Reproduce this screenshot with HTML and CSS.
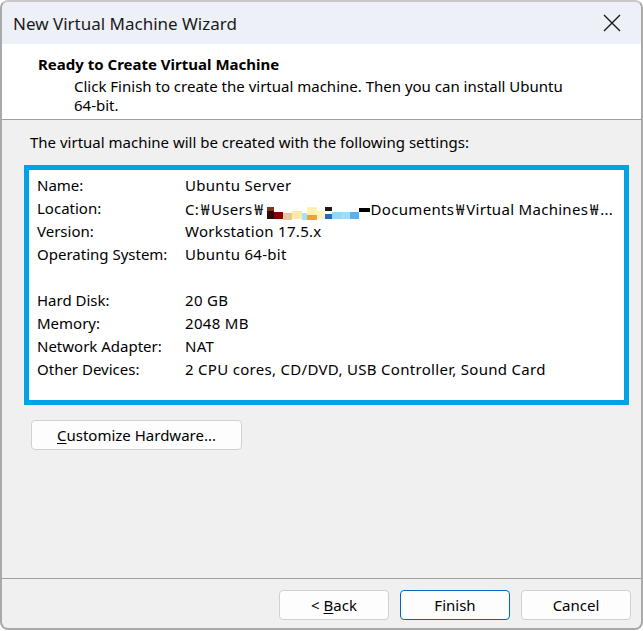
FILE: index.html
```html
<!DOCTYPE html>
<html lang="en">
<head>
    <meta charset="UTF-8">
    <title>New Virtual Machine Wizard</title>
    <link rel="stylesheet" href="styles.css">
</head>
<body>
    <div class="window">
        <div class="titlebar">
            <span class="title">New Virtual Machine Wizard</span>
            <svg class="close" width="18" height="18" viewBox="0 0 18 18">
                <path d="M1 1 L17 17 M17 1 L1 17" stroke="#1a1a1a" stroke-width="1.4" fill="none"/>
            </svg>
        </div>

        <div class="header">
            <div class="header-title">Ready to Create Virtual Machine</div>
            <div class="header-sub">Click Finish to create the virtual machine. Then you can install Ubuntu<br>64-bit.</div>
        </div>

        <div class="content">
            <p class="intro">The virtual machine will be created with the following settings:</p>

            <div class="summary">
                <div class="row"><span class="label">Name:</span><span class="value">Ubuntu Server</span></div>
                <div class="row"><span class="label">Location:</span><span class="value">C:<span class="won">₩</span>Users<span class="won">₩</span><span class="mosaic"><i class="m1"></i><i class="m2"></i><i class="m3"></i><i class="m4"></i><i class="m5"></i><i class="m6"></i><i class="m7"></i><i class="m8"></i><i class="m9"></i><i class="m10"></i><i class="m11"></i><i class="m12"></i></span>Documents<span class="won">₩</span>Virtual Machines<span class="won">₩</span>...</span></div>
                <div class="row"><span class="label">Version:</span><span class="value">Workstation 17.5.x</span></div>
                <div class="row"><span class="label">Operating System:</span><span class="value">Ubuntu 64-bit</span></div>
                <div class="row blank"></div>
                <div class="row"><span class="label">Hard Disk:</span><span class="value">20 GB</span></div>
                <div class="row"><span class="label">Memory:</span><span class="value">2048 MB</span></div>
                <div class="row"><span class="label">Network Adapter:</span><span class="value">NAT</span></div>
                <div class="row"><span class="label">Other Devices:</span><span class="value">2 CPU cores, CD/DVD, USB Controller, Sound Card</span></div>
            </div>

            <button class="btn btn-custom"><u>C</u>ustomize Hardware...</button>
        </div>

        <div class="footer">
            <button class="btn">&lt; <u>B</u>ack</button>
            <button class="btn btn-default">Finish</button>
            <button class="btn">Cancel</button>
        </div>
    </div>
</body>
</html>
```

FILE: styles.css
```css
body {
    margin: 0;
    background-color: #ffffff;
    font-family: "Noto Sans", "Liberation Sans", sans-serif;
    color: #000;
}
.window {
    box-sizing: border-box;
    width: 643px;
    height: 630px;
    border: 2px solid #a9a9a9;
    border-top-color: #c8c8c8;
    border-radius: 8px;
    background-color: #f0f0f0;
    overflow: hidden;
    display: flex;
    flex-direction: column;
}
.titlebar {
    height: 42px;
    background-color: #eef0f7;
    display: flex;
    align-items: center;
    justify-content: space-between;
    padding: 0 20px 0 11px;
    flex-shrink: 0;
}
.title {
    font-size: 17px;
    color: #1a1a1a;
    margin-top: 1px;
}
.header {
    height: 76px;
    background-color: #ffffff;
    border-bottom: 1px solid #a0a0a0;
    padding: 10px 0 0 36px;
    box-sizing: border-box;
    flex-shrink: 0;
}
.header-title {
    font-weight: bold;
    font-size: 15px;
    line-height: 20px;
}
.header-sub {
    font-size: 15px;
    line-height: 19px;
    padding-left: 36px;
    margin-top: 3px;
}
.content {
    flex: 1;
    padding: 0 0 0 22px;
}
.intro {
    font-size: 15px;
    line-height: 20px;
    margin: 12px 0 0 6px;
}
.summary {
    box-sizing: border-box;
    width: 605px;
    border: 5px solid #00a2e8;
    background-color: #ffffff;
    margin-top: 13px;
    padding: 4px 8px 19px 8px;
    font-size: 15px;
}
.row {
    display: flex;
    height: 23px;
    line-height: 23px;
    white-space: nowrap;
}
.label {
    width: 148px;
    flex-shrink: 0;
}
.value {
    overflow: hidden;
    letter-spacing: 0.3px;
}
.won {
    font-family: "Noto Sans CJK KR", "Noto Sans", sans-serif;
    font-size: 15px;
    letter-spacing: 0;
    display: inline-block;
    width: 12px;
    text-align: center;
}
.mosaic {
    display: inline-flex;
    vertical-align: -4px;
    height: 18px;
    align-items: flex-start;
    margin: 0 1px 0 2px;
}
.mosaic i {
    display: inline-block;
    width: 9px;
    height: 12px;
}
.mosaic .m1 { background: linear-gradient(#7a3a1a 35%, #2a0a0a 35%); width: 7px; }
.mosaic .m2 { background: linear-gradient(#ffffff 40%, #8b0000 40%); }
.mosaic .m3 { background: linear-gradient(#ffffff 40%, #e8c898 40%); height: 14px; }
.mosaic .m4 { background: linear-gradient(#ffffff 30%, #fde9a8 30%); width: 10px; }
.mosaic .m5 { background: linear-gradient(#ffffff 40%, #a8e0ff 40%); width: 5px; height: 16px; }
.mosaic .m6 { background: linear-gradient(#fff2b0 50%, #f0a040 50%); width: 10px; height: 15px; }
.mosaic .m7 { background: linear-gradient(#ffffff 30%, #fff5c0 30%); width: 8px; }
.mosaic .m8 { background: linear-gradient(#1a1a1a 30%, #ffffff 30%, #ffffff 60%, #1e6ec8 60%); width: 7px; }
.mosaic .m9 { background: linear-gradient(#ffffff 40%, #90d8f8 40%); }
.mosaic .m10 { background: linear-gradient(#ffffff 40%, #a0dcfa 40%); }
.mosaic .m11 { background: linear-gradient(#ffffff 40%, #5ab0f0 40%); }
.mosaic .m12 { background: linear-gradient(#000000 45%, #ffffff 45%); width: 11px; height: 8px; margin-top: 1px; }
.btn {
    font-family: "Noto Sans", "Liberation Sans", sans-serif;
    font-size: 15px;
    height: 30px;
    width: 110px;
    background-color: #fdfdfd;
    border: 1px solid #d0d0d0;
    border-radius: 4px;
    color: #000;
    padding: 0;
}
.btn u {
    text-underline-offset: 2px;
}
.btn-custom {
    width: 211px;
    margin: 15px 0 0 7px;
}
.btn-default {
    border-color: #0067c0;
}
.footer {
    height: 50px;
    border-top: 1px solid #a0a0a0;
    flex-shrink: 0;
    display: flex;
    justify-content: flex-end;
    gap: 11px;
    padding: 11px 10px 0 0;
    box-sizing: border-box;
}
```
